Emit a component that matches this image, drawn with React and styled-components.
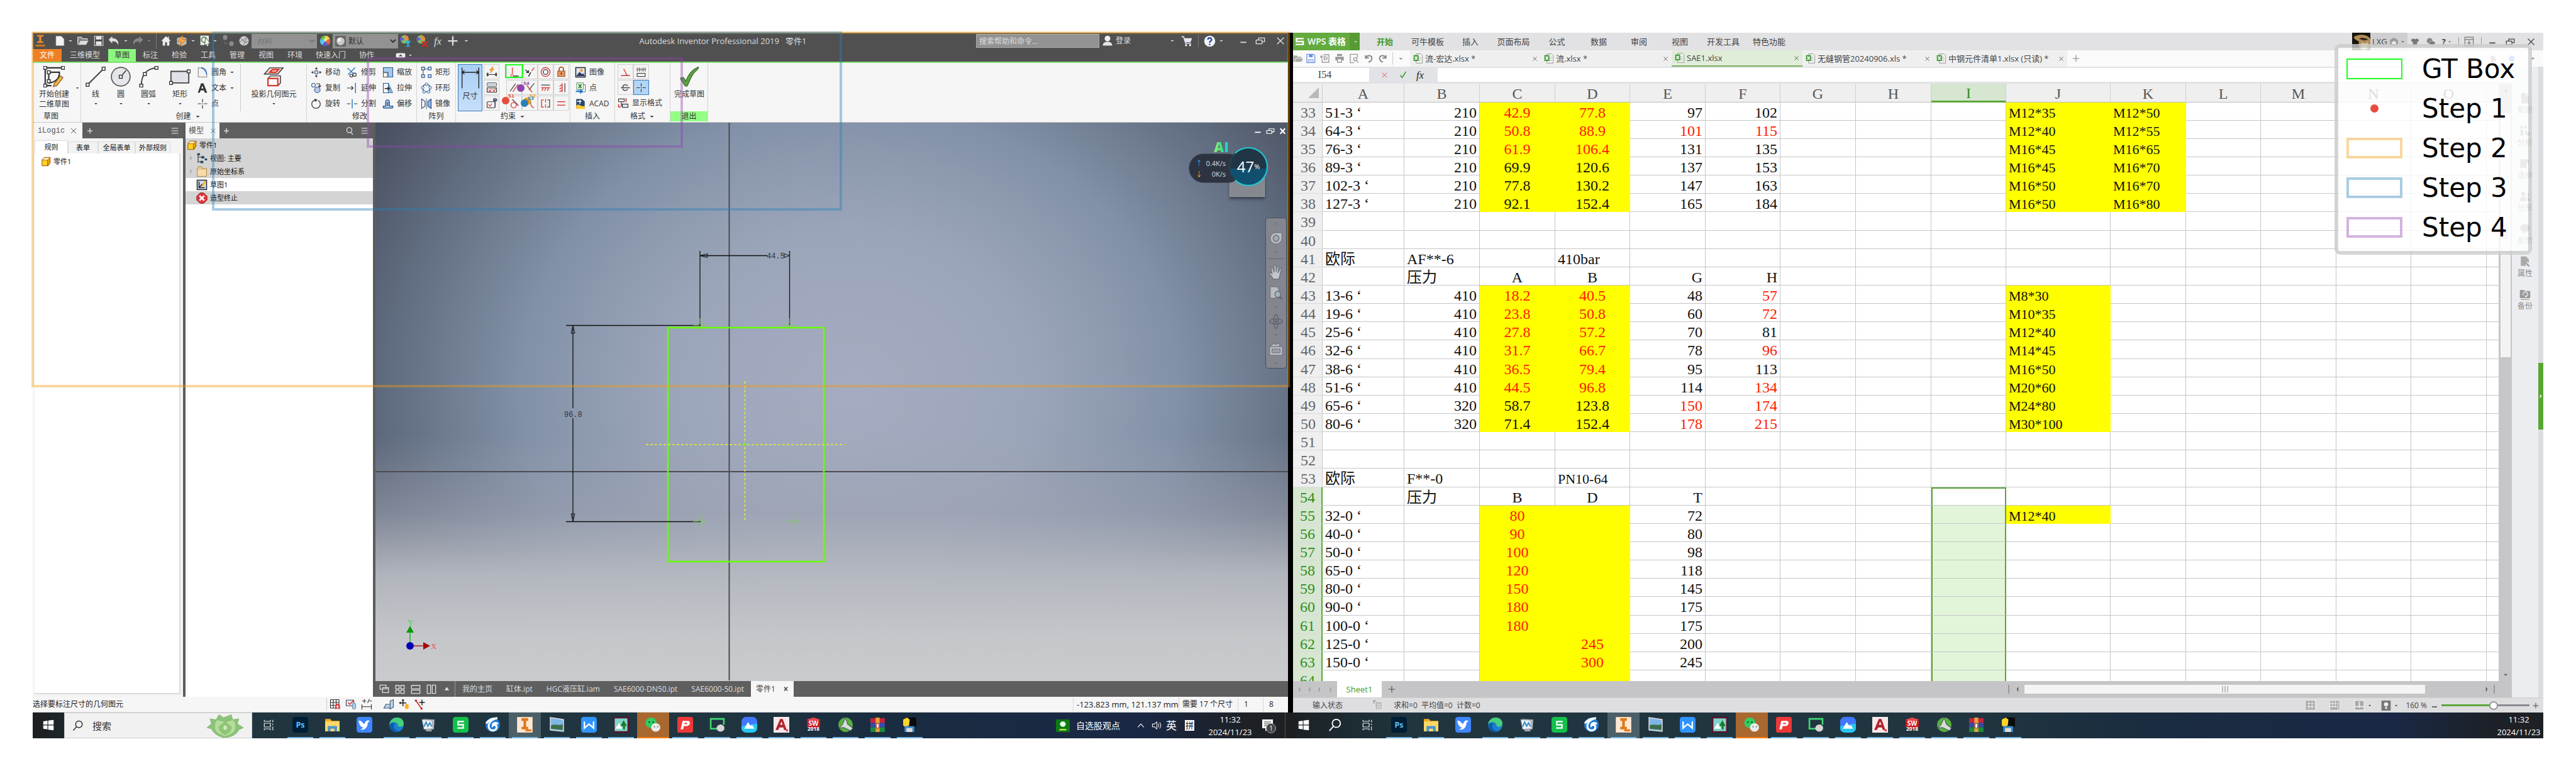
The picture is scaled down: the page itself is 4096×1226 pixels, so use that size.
import React from "react";
import styled, { createGlobalStyle, css } from "styled-components";

const SANS = '"Open Sans", "Noto Sans CJK SC", sans-serif';
const SERIF = '"Liberation Serif", "Noto Sans CJK SC", serif';

const Global = createGlobalStyle`
  * { box-sizing: border-box; }
  body { margin: 0; background: #fff; font: 12px/16px ${SANS}; color: #222; }
  button, input { font: inherit; color: inherit; margin: 0; }
  svg { display: block; flex: none; }
`;

/* ---------- icons ---------- */

const S = { fill: "none", stroke: "#333", strokeWidth: 1.5 };
const P = (d, stroke = "#333", fill = "none", w = 1.5) => (
  <path d={d} stroke={stroke} fill={fill} strokeWidth={w} />
);
const sq = (x, y, c = "#333") => <rect key={x + "-" + y} x={x - 1.7} y={y - 1.7} width="3.4" height="3.4" fill="#fff" stroke={c} />;

const ART = {
  down: P("M4 8h16l-8 9z", "none", "currentColor"),
  up: P("M4 17h16L12 5z", "none", "currentColor"),
  left: P("M17 2v20L7 12z", "none", "currentColor"),
  right: P("M7 2v20l10-10z", "none", "currentColor"),
  plus: P("M12 2v20M2 12h20", "currentColor", "none", 3),
  thinPlus: P("M12 3v18M3 12h18", "currentColor", "none", 2),
  close: P("M4 4l16 16M20 4L4 20", "currentColor", "none", 2),
  boldClose: P("M5 4l14 16M19 4L5 20", "currentColor", "none", 4),
  min: P("M4 16h16", "currentColor", "none", 3),
  restore: P("M8 9V5h14v9h-5M2 10h14v9H2z", "currentColor", "none", 2),
  burger: P("M3 4h18M3 12h18M3 20h18", "currentColor", "none", 2),
  search: <><circle cx="11" cy="10" r="7" fill="none" stroke="currentColor" strokeWidth="2" />{P("M15 16l6 6", "currentColor", "none", 2)}</>,
  searchWin: <><circle cx="14" cy="9" r="7" fill="none" stroke="currentColor" strokeWidth="2" />{P("M9 14l-7 8", "currentColor", "none", 2)}</>,
  pro: <><path d="M6 1h12v3h-4v9h4v3H6v-3h4V4H6z" fill="#e98c2e" /><rect x="3" y="19" width="18" height="4" fill="#c8741f" /></>,
  newDoc: P("M4 2h11l6 6v14H4z", "#aaa", "#f2f2f2", 1),
  open: <>{P("M2 20V5h7l2 3h9v3", "#ddd", "#888")}{P("M2 20l5-9h16l-5 9z", "#555", "#ddd", 1)}</>,
  save: <>{P("M3 2h18v20H3z", "#ddd", "#444", 1.5)}<rect x="6" y="3" width="12" height="6" fill="#eee" /><rect x="6" y="13" width="12" height="8" fill="#e6e6e6" /></>,
  undo: P("M9 3L2 10l7 7v-4c6 0 9 1 11 7 2-7-2-13-11-13z", "none", "currentColor"),
  redo: P("M15 3l7 7-7 7v-4c-6 0-9 1-11 7C2 13 6 7 15 7z", "none", "#888"),
  home: P("M12 2L2 12h3v10h5v-7h4v7h5V12h3l-4-4V3h-2v3z", "none", "#eee"),
  bolt: <><path d="M3 7l9-3 9 3v11l-9 4-9-4z" fill="#bbb" /><path d="M14 1L5 13h6l-3 10L20 9h-7z" fill="#ffb13b" stroke="#c85a10" /></>,
  select: <><rect x="2" y="2" width="16" height="18" fill="#eee" /><circle cx="9" cy="10" r="5" fill="none" stroke="#4a8a3a" strokeWidth="2" /><path d="M12 6l9 11-5 0 2 5-3 1-2-5-3 3z" fill="#fff" stroke="#333" /></>,
  chain: <g fill="#8b8b8b"><rect x="2" y="1" width="8" height="9" rx="3" /><rect x="14" y="13" width="8" height="9" rx="3" /><path d="M5 12v5h6" fill="none" stroke="#777" /></g>,
  globe: <><circle cx="12" cy="12" r="10" fill="#ccc" /><path d="M4 6l6 4 8-5M3 14l7-4 4 6 7-3M10 10l4 6-4 5M18 5l-4 11" stroke="#666" fill="none" /></>,
  wheel: <><path d="M12 12L12 1A11 11 0 0 1 22 8z" fill="#f6d53b" /><path d="M12 12L22 8a11 11 0 0 1-4 13z" fill="#e8643a" /><path d="M12 12l6 9a11 11 0 0 1-12 0z" fill="#5a5be0" /><path d="M12 12l-6 9A11 11 0 0 1 2 8z" fill="#56c3ee" /><path d="M12 12L2 8A11 11 0 0 1 12 1z" fill="#6fbd4e" /><circle cx="12" cy="10" r="4" fill="#fff" opacity=".5" /></>,
  wheelCup: <><circle cx="10" cy="9" r="8" fill="#7fbf5f" /><path d="M10 9V1a8 8 0 0 1 7 11z" fill="#ee8a3a" /><path d="M10 9L3 13a8 8 0 0 1 0-9z" fill="#6a5ae0" /><path d="M11 12h11l-4 6v4h3v1h-9v-1h3v-4z" fill="#35b0e8" /></>,
  wheelX: <><circle cx="10" cy="9" r="8" fill="#7fbf5f" /><path d="M10 9V1a8 8 0 0 1 7 11z" fill="#ee8a3a" /><path d="M10 9L3 13a8 8 0 0 1 0-9z" fill="#6a5ae0" /><path d="M12 13l10 10M22 13L12 23" stroke="#d42a20" strokeWidth="3" /></>,
  ball: <><rect width="24" height="24" fill="#666" /><circle cx="12" cy="12" r="9" fill="#c9c9c9" /><circle cx="9" cy="9" r="4" fill="#f2f2f2" /></>,
  person: <><circle cx="12" cy="7" r="6" fill="#f0f0f0" /><path d="M2 22c0-6 5-8 10-8s10 2 10 8z" fill="#e5e5e5" /></>,
  cart: <><path d="M1 3h4l4 13h11" stroke="#e8e8f4" strokeWidth="2" fill="none" /><path d="M6 6h16l-3 8H8z" fill="#e8e8f4" /><circle cx="10" cy="20" r="2" fill="#fff" /><circle cx="18" cy="20" r="2" fill="#fff" /></>,
  help: <><circle cx="12" cy="12" r="11" fill="#f2f4f8" /><path d="M8.5 9a3.5 3.5 0 1 1 5 3c-1.5 1-1.5 1.5-1.5 3M12 17v3" stroke="#2c4a9a" strokeWidth="3" fill="none" /></>,
  panelToggle: <><rect x="1" y="5" width="22" height="14" rx="3" fill="#eee" /><path d="M7 15l5-6 5 6z" fill="#444" /></>,

  startSketch: <>{P("M2 2v20M2 2h20M2 22h7M6 7h12c0 7-4 11-12 12z")}{[[2,2],[22,2],[2,22],[6,7],[6,17]].map(([a,b]) => sq(a,b))}<path d="M12 20l7-9 3 2-7 9-4 1z" fill="#f4b548" stroke="#7a5a20" strokeWidth=".8" /></>,
  line: <>{P("M3 21L21 3", "#444", "none", 1.4)}{sq(3, 21)}{sq(21, 3)}</>,
  circle: <><circle cx="12" cy="12" r="10.5" fill="#e4e6ea" stroke="#555" strokeWidth="1.2" />{P("M12 12l6-7", "#333", "none", 1)}{sq(12, 12)}</>,
  arc: <>{P("M4 22C4 10 10 3 21 2", "#444", "none", 1.4)}{sq(4, 22)}{sq(8, 9)}{sq(21, 2)}</>,
  rect: <>{P("M2 6h20v13H2z", "#444", "#dfe2e7", 1.3)}{sq(2, 19)}{sq(22, 6)}</>,
  fillet: <>{P("M3 2v20h18v-5C20 8 14 3 3 2z", "#888", "#f2f2f2")}{P("M9 2c7 1 11 7 12 14", "#2f7fd0", "none", 2.5)}</>,
  text: <path d="M9 2h5l8 20h-5l-2-5H8l-2 5H2zM9.5 13h4.5L11.7 7z" fill="#333" fillRule="evenodd" />,
  point: P("M12 2v7M12 15v7M2 12h7M15 12h7M11 12h2", "#333", "none", 1.6),
  project: <><path d="M7 2h15l-6 7H1z" fill="#f6dada" stroke="#333" /><path d="M10 4h7l-3 3H7z" fill="none" stroke="#e03020" strokeWidth="1.5" /><path d="M5 14l3-3h11v8l-3 3" fill="#eee" stroke="#333" /><rect x="5" y="14" width="11" height="8" fill="#fff" stroke="#e03020" strokeWidth="1.5" /></>,
  move: <><path d="M12 1l3 4H9zM12 23l3-4H9zM1 12l4-3v6zM23 12l-4-3v6z" fill="#333" /><path d="M12 5v2M12 17v2M5 12h2M17 12h2" {...S} /><rect x="9" y="9" width="6" height="6" {...S} stroke="#357" /></>,
  trim: <>{P("M2 3l13 12M3 17L18 2", "#2f7fd0", "none", 2)}<circle cx="17" cy="17" r="3.5" {...S} /><circle cx="10" cy="19" r="3" {...S} /></>,
  scale: <>{P("M2 2h20v20H12V12H2z", "#2d5b96", "#a8c8ec")}{P("M2 13h9v9H2z", "#555", "#fff")}</>,
  copy: <><circle cx="6" cy="6" r="4" {...S} stroke="#2d5b96" /><circle cx="14" cy="16" r="6" fill="#b8cbe6" stroke="#2d5b96" strokeWidth="1.5" />{P("M12 3h7v6M16 7l3 3 3-3")}</>,
  extend: <>{P("M1 12h12M10 8l4 4-4 4")}{P("M19 1v22", "#2f7fd0", "none", 2)}</>,
  stretch: <>{P("M2 2h11v20H2z", "#2d5b96", "#f4f6fa")}<path d="M13 2l9 20h-9z" fill="#8fb6e4" stroke="#2d5b96" />{P("M5 13h9M11 10l4 3-4 3", "#222", "none", 2)}</>,
  rotate: <>{P("M9 4a9 9 0 1 0 7 1", "#555", "none", 2)}<path d="M8 1l7 3-6 4z" fill="#333" /></>,
  split: <>{P("M1 12h7M16 12h7")}{P("M12 2v20", "#2f7fd0", "none", 2)}</>,
  offset: <>{P("M2 21h20M2 21v-4h5V9c0-3 1-5 4-5s4 2 4 5v8h7v4", "#2d5b96", "#c9dcf2", 2)}{P("M10 17V9h2v8", "#2d5b96")}</>,
  patRect: <>{P("M5 5h14M5 5v14", "#555")}{[[5,4],[19,4],[5,20],[19,20]].map(([x,y]) => <rect key={x+"/"+y} x={x-3} y={y-3} width="6" height="6" fill="#dfeaf8" stroke="#234a86" strokeWidth="1.5" />)}</>,
  patCirc: <><circle cx="12" cy="12" r="8" {...S} />{[[12,4],[20,11],[17,20],[7,20],[4,11]].map(([x,y]) => <circle key={x+"/"+y} cx={x} cy={y} r="3" fill="#cfe2f8" stroke="#2f6fb4" strokeWidth="1.2" />)}</>,
  mirror: <>{P("M12 1v22", "#333", "none", 1)}{P("M2 2l7 5v10l-7 5z", "#234a86", "#fff")}{P("M22 2l-7 5v10l7 5z", "#234a86", "#8fb6e4")}</>,
  image: <><rect x="2" y="2" width="20" height="20" fill="#dfe6ee" stroke="#223" strokeWidth="2" /><circle cx="14" cy="8" r="3" fill="#f0a020" /><path d="M3 20l7-9 5 5 3-2 3 6z" fill="#2a3c66" /></>,
  excel: <><rect x="8" y="5" width="14" height="15" fill="#fff" stroke="#345" /><rect x="4" y="1" width="14" height="14" fill="#eaf5e6" stroke="#2e7d32" />{P("M8 4l6 8M14 4l-6 8", "#2e7d32", "none", 2.5)}{P("M2 19h12M11 15l5 4-5 4", "#1976d2", "none", 2.5)}</>,
  acad: <><path d="M3 2h12l6 5v15H3z" fill="#26486f" /><path d="M3 16c8-6 10 5 18 0v7H3z" fill="#ffc72e" />{P("M5 7h9M11 4v8", "#fff", "none", 2)}</>,
  format: <><rect x="2" y="3" width="12" height="6" {...S} /><rect x="10" y="14" width="12" height="7" fill="#dbe8f8" stroke="#333" strokeWidth="1.5" />{P("M2 14v6h5M18 10V3h-2", "#e03030", "none", 2)}{P("M8 9v9h2", "#333")}</>,
  check: <path d="M2 14c2-2 4-2 6 3C11 9 15 4 22 1c1 1 0 2-1 3-6 5-8 11-11 18-1 1-2 1-3 0z" fill="#5f9f45" stroke="#2f6a22" strokeWidth=".8" />,
  dimAuto: <>{P("M2 14v8M22 14v8M2 18h20M5 15l-3 3 3 3M19 15l3 3-3 3")}<path d="M14 1L7 9h4l-2 6 8-9h-4z" fill="#ffb020" stroke="#d06010" strokeWidth=".7" /></>,
  showCons: <><rect x="2" y="2" width="20" height="8" rx="1" fill="#ccd2da" stroke="#444" /><rect x="2" y="13" width="20" height="9" {...S} />{P("M5 17l3 4 3-6M14 16l3 4 3-6", "#d03020")}</>,
  consSet: <><rect x="2" y="9" width="17" height="13" rx="2" {...S} />{P("M5 14l3 5 4-6", "#d03020")}{P("M19 1v8M16 2v5h6V2M19 9v11", "#557", "none", 2.5)}</>,
  coincident: <>{P("M8 2v14", "#e04040", "none", 2)}{P("M10 21h12", "#555", "none", 2.5)}<rect x="5" y="18" width="5" height="5" fill="#fff" stroke="#e04040" strokeWidth="1.5" /></>,
  collinear: <>{P("M2 7l7 6M9 8v5H4M9 22l5-9", "#222", "none", 2)}{P("M16 10l6-8", "#e04040", "none", 2)}</>,
  concentric: <><circle cx="12" cy="12" r="10" {...S} stroke="#e04040" strokeWidth="2" /><circle cx="12" cy="12" r="5.5" {...S} stroke="#444" strokeWidth="2" /></>,
  lock: <>{P("M7 10V6a5 5 0 0 1 10 0v4", "#a0522d", "none", 2.5)}<rect x="4" y="10" width="16" height="12" fill="#e8955c" stroke="#a0522d" strokeWidth="1.5" />{P("M12 13v5", "#5c2c10", "none", 2)}</>,
  parallel: <>{P("M3 20L15 3", "#555", "none", 2)}{P("M9 21L21 4", "#e04040", "none", 2)}</>,
  perp: <>{P("M22 2L10 17", "#555", "none", 2)}{P("M5 6l12 16", "#e04040", "none", 2)}</>,
  horiz: <>{P("M2 6h20", "#555", "none", 2)}{P("M2 12h20M7 12l-3 7M13 12l-3 7M19 12l-3 7", "#e04040", "none", 2)}</>,
  vert: <>{P("M20 2v20", "#555", "none", 2)}{P("M14 2v20M14 5l-6 4M14 11l-6 4M14 17l-6 4", "#e04040", "none", 2)}</>,
  tangent: <>{P("M8 3l14 14", "#555", "none", 2)}<circle cx="11" cy="16" r="6" {...S} stroke="#e04040" strokeWidth="2" /></>,
  smooth: <>{P("M10 2c4 3 4 8 4 10", "#555", "none", 2)}{P("M14 12c0 5 3 8 7 10", "#e04040", "none", 2)}</>,
  symm: <>{P("M8 4H3v16h5", "#e04040", "none", 2)}{P("M16 4h5v16h-5", "#555", "none", 2)}{P("M12 2v8M12 14v8", "#e04040", "none", 2)}</>,
  equal: P("M3 8h18M3 16h18", "#e04040", "none", 2.2),
  angle: <>{P("M8 5l8 15", "#e04040", "none", 2)}{P("M2 20h20", "#c03030", "none", 2)}</>,
  param: <><rect x="3" y="15" width="18" height="7" {...S} />{P("M3 2v9M8 2v9M3 6h5M16 2v9M21 2v9M16 6h5M10 4l4 5M14 4l-4 5", "#333", "none", 1.3)}</>,
  ctr: <>{P("M2 12h20M6 12a6 6 0 0 1 11-4M17 15a6 6 0 0 1-11-1", "#444", "none", 2)}</>,
  dimBig: <path d="M2 1v22M22 1v22M2 6h20M5 4L2 6l3 2M19 4l3 2-3 2" stroke="#222" strokeWidth="1" fill="none" />,

  cube: <><path d="M3 8l5-6h14v13l-5 7H3z" fill="#fff3b0" stroke="#9a4a10" strokeWidth="1.5" /><rect x="3" y="8" width="13" height="14" fill="#ffd21f" stroke="#9a4a10" /><path d="M16 8l6-6v13l-6 7z" fill="#e8a800" stroke="#9a4a10" /></>,
  views: <>{P("M4 3v18M4 9h8M4 19h8", "#333", "none", 1.5)}<g fill="#234a66"><rect x="2" y="1" width="6" height="4" /><rect x="11" y="7" width="6" height="5" /><rect x="9" y="17" width="6" height="5" /><rect x="18" y="12" width="5" height="4" /></g></>,
  folder: <><path d="M2 5l3-4h6l2 4h9v17H2z" fill="#e8c48a" stroke="#a0783a" /><path d="M3 8h18v13H3z" fill="#f6dca8" /></>,
  sketch: <><rect x="2" y="2" width="20" height="20" fill="#cfe0f4" stroke="#223" strokeWidth="2" />{P("M6 5v13h12M6 18L13 10", "#222", "none", 2)}<path d="M12 12l5-9 4 2-5 9-4 2z" fill="#f6b53a" /></>,
  endMark: <><path d="M8 1h8l7 7v8l-7 7H8l-7-7V8z" fill="#e3343a" stroke="#7a1010" /><path d="M7 7l10 10M17 7L7 17" stroke="#fff" strokeWidth="3.5" /></>,
  chevron: P("M8 5l7 7-7 7", "#999", "none", 3),

  cascade: P("M2 2h14v5M2 2v10h4M8 8h14v12H8zM8 11h14", "currentColor", "none", 2),
  grid4: P("M2 3h8v8H2zM14 3h8v8h-8zM2 14h8v8H2zM14 14h8v8h-8z", "currentColor", "none", 2),
  rows2: P("M2 3h20v8H2zM2 14h20v8H2z", "currentColor", "none", 2),
  cols2: P("M2 2h8v20H2zM14 2h8v20h-8z", "currentColor", "none", 2),

  gridSnap: <>{P("M2 2h18v18H2zM2 8h18M2 14h10M8 2v18M14 2v10", "#333")}<path d="M12 22v-6a5 5 0 0 1 10 0v6h-3v-6a2 2 0 0 0-4 0v6z" fill="#e03030" /></>,
  shield: <>{P("M2 3h16v12H2z", "#445", "#eef")}{P("M6 8l4 4 8-9", "#d03020", "none", 2)}<rect x="15" y="9" width="7" height="13" rx="3" fill="#a8d0f0" stroke="#467" /></>,
  tolerance: <>{P("M2 12v11M22 12v11M2 17h20M3 5h8M7 1v8M14 9l4-8M18 5h5", "#333", "none", 1.5)}</>,
  slab: <>{P("M2 20l4-8h9v8zM15 5l7-3v16l-7 4z", "#456", "#b8d4f0")}</>,
  moveBulb: <>{P("M9 2v14M2 9h14M7 4l2-2 2 2M4 7L2 9l2 2", "#222", "none", 2)}<rect x="13" y="11" width="8" height="11" rx="4" fill="#ffb020" /></>,
  moveLine: <>{P("M16 2v12M10 8h12", "#222", "none", 2)}{P("M3 4l12 17", "#d02020", "none", 2)}<rect x="1" y="2" width="4" height="4" fill="#d02020" /><rect x="13" y="19" width="4" height="4" fill="#d02020" /></>,

  navWheel: <><path d="M12 3h10v9a10 9 0 1 1-10-9z" fill="#b9bdc2" stroke="#666c74" /><circle cx="12" cy="12" r="5" fill="#a5aab0" stroke="#666c74" strokeWidth="1.5" /></>,
  hand: <path d="M8 22c-3-4-5-6-7-9 2-2 4 0 5 2L4 5c2-1 3 0 3 2l2 5V2c2-1 3 0 3 2v8l2-9c2 0 2 1 2 3l-1 7 4-7c2 0 2 1 1 3-2 5-2 9-4 13z" fill="#c3c7cc" stroke="#666c74" />,
  pageZoom: <><path d="M2 2h11l4 4v14H2z" fill="#b9bdc2" stroke="#666c74" /><circle cx="15" cy="14" r="5" fill="#a5b5b5" stroke="#666c74" strokeWidth="1.5" />{P("M18 18l5 4", "#666c74", "none", 3)}</>,
  orbit: <><ellipse cx="12" cy="12" rx="11" ry="4" {...S} stroke="#5c626c" /><ellipse cx="12" cy="12" rx="4" ry="11" {...S} stroke="#5c626c" />{P("M12 9v6M9 12h6", "#5c626c")}</>,
  camera: <><path d="M1 8h22v14H1z" fill="#b9bdc2" stroke="#666c74" /><rect x="5" y="12" width="14" height="6" fill="#9a9fa8" stroke="#666c74" /><path d="M1 8l9-6v3l8-2v5z" fill="#b9bdc2" stroke="#666c74" /></>,

  win: <path d="M1 4l9-1.5V11H1zM11.5 2.3L23 1v10H11.5zM1 12.5h9V21l-9-1.5zM11.5 12.5H23V23l-11.5-1.5z" fill="#fff" />,
  task: P("M3 1v3h13V1M3 8h13v8H3zM3 23v-3h13v3M21 1v5M21 9v3M21 15v8", "#eee", "none", 1.6),
  ps: <><rect width="24" height="24" rx="4" fill="#001e36" /><text x="12" y="16" fontSize="12" fontWeight="700" textAnchor="middle" fill="#5ac1ff" fontFamily="Open Sans">Ps</text></>,
  explorer: <><path d="M1 3h8l2 3h12v16H1z" fill="#f2b01e" /><path d="M1 7h22v15H1z" fill="#ffd868" /><path d="M5 22v-8h14v8h-4v-4H9v4z" fill="#4a94d0" /></>,
  bird: <><rect width="24" height="24" rx="4" fill="#3f86ff" /><path d="M3 6c5-1 6 4 9 5 1-4 4-7 8-5l-3 3c0 8-6 12-12 10 2 0 4-1 5-3-4 0-6-5-7-10z" fill="#fff" /></>,
  edge: <><circle cx="12" cy="12" r="11" fill="#1a7fcf" /><path d="M1 12C2 4 8 1 13 1c7 0 10 5 10 9 0 3-2 5-6 5-3 0-3-2-3-3 0-4-9-7-13 0z" fill="#45d07a" /><path d="M9 10c-4 4 0 12 8 12-9 4-16-2-16-9 1-3 5-5 8-3z" fill="#0e5aa8" /></>,
  monitorApp: <><path d="M4 3l17 1-1 15-13 1z" fill="#b8bec4" /><path d="M2 4l15 1 2 13-14 1z" fill="#eef1f4" stroke="#99a" /><path d="M5 15l3-7 3 6 3-5 3 6" stroke="#3a8fc0" strokeWidth="2" fill="none" /><path d="M8 19l8-1 1 4H8z" fill="#a0a5aa" /></>,
  wpsS: <><rect width="24" height="24" rx="4" fill="#12c04a" />{P("M17 7H8v5h8v5H7", "#fff", "none", 2.2)}</>,
  swirl: <><circle cx="12" cy="12" r="11" fill="#1f7ad8" /><path d="M19 2C9 4 5 10 6 16c2 6 11 6 12 0 0-4-4-5-6-3 0-4 5-5 8-2M2 10C6 4 13 2 19 2" stroke="#fff" strokeWidth="3" fill="none" /></>,
  inventor: <><rect width="24" height="24" fill="#fbe9d8" stroke="#e2a66c" /><path d="M7 2h10v4h-3v9h3v4H7v-4h3V6H7z" fill="#e07818" /><rect x="13" y="19" width="9" height="3" fill="#e07818" /></>,
  photo: <><path d="M2 1l20 3v18l-20-2z" fill="#7fb6e6" stroke="#ddd" strokeWidth="1.5" /><path d="M3 13c6-3 12 1 18-2v9l-18-2z" fill="#3d6e4a" /></>,
  wpsW: <><rect width="24" height="24" rx="4" fill="#2f94ff" />{P("M5 7v10l7-6 7 6V7", "#fff", "none", 2.2)}</>,
  tree: <><rect x="1" y="1" width="22" height="22" fill="#7fd6c8" stroke="#5a1030" strokeWidth="2.5" /><path d="M3 18l6-9 5 9z" fill="#fff" /><path d="M16 5l5 9h-3v5h-3v-5h-4z" fill="#1c7a2a" /></>,
  wechat: <><ellipse cx="9" cy="9" rx="8.5" ry="8" fill="#2fce63" /><circle cx="6" cy="8" r="1.3" fill="#145c2a" /><circle cx="12" cy="8" r="1.3" fill="#145c2a" /><ellipse cx="16" cy="16" rx="7" ry="6.5" fill="#ececec" /><circle cx="14" cy="15" r="1" fill="#777" /><circle cx="19" cy="15" r="1" fill="#777" /></>,
  pdfP: <><rect width="24" height="24" rx="3" fill="#ee3838" /><path d="M5 19l3-13h8c5 0 4 8-2 8h-4l-1 5z" fill="#fff" /><path d="M11 9h4v2h-4z" fill="#ee3838" /></>,
  castChat: <>{P("M16 18H2V3h20v9", "#3dd873", "none", 2.5)}<ellipse cx="17" cy="17" rx="6" ry="5.5" fill="#d5d5d5" /></>,
  mountain: <><rect width="24" height="24" rx="7" fill="#3f78ff" /><path d="M0 14l24-4v7a7 7 0 0 1-7 7H7a7 7 0 0 1-7-7z" fill="#25c7f0" /><path d="M4 18l6-10 4 6 2-2 4 6z" fill="#fff" /></>,
  autocad: <><rect width="24" height="24" fill="#f8eaea" /><path d="M3 20L10 3h4l6 17h-4l-1-4H9l-2 4zM10 12h4l-2-5z" fill="#b3202c" fillRule="evenodd" /><rect x="19" y="19" width="3" height="3" fill="#e03040" /></>,
  solid: <><path d="M2 4l10-3 10 3v11l-10 4-10-4z" fill="#c81820" /><path d="M12 1l10 3-10 4L2 4z" fill="#e84a50" /><text x="12" y="13" fontSize="10" fontWeight="700" textAnchor="middle" fill="#fff" fontFamily="Open Sans">SW</text><text x="12" y="21" fontSize="8" fontWeight="700" textAnchor="middle" fill="#fff" fontFamily="Open Sans">2018</text></>,
  coil: <><circle cx="12" cy="12" r="11" fill="#57b03c" /><path d="M12 1l3 10 8 6-3 4-11-5-7 1 5-5z" fill="#d8dcd4" stroke="#456" /></>,
  rar: <><rect x="1" y="2" width="22" height="7" fill="#c8243c" /><rect x="1" y="9" width="22" height="7" fill="#3c48a8" /><rect x="1" y="16" width="22" height="7" fill="#1c8a3c" /><rect x="9" y="1" width="6" height="22" fill="#e8a23a" /><rect x="10" y="10" width="4" height="7" fill="#fff" stroke="#933" /></>,
  python: <><rect x="6" y="1" width="16" height="14" fill="#0a0a0a" /><path d="M2 4l6-3 4 3-1 9-5 3-4-3z" fill="#ffd42a" /><rect x="4" y="14" width="15" height="9" fill="#3c88c8" /><rect x="7" y="17" width="9" height="6" fill="#ddd" /></>,
  stock: <><rect width="24" height="24" rx="2" fill="#0d7a14" /><circle cx="12" cy="9" r="5" fill="#eaffea" /><rect x="6" y="18" width="12" height="3" fill="#b8e04a" /></>,
  speaker: P("M2 9h4l6-5v16l-6-5H2zM15 8c2 3 2 5 0 8M18 5c4 5 4 9 0 14", "#eee", "none", 1.5),
  caret: P("M4 16l8-9 8 9", "#eee", "none", 2),
  note: <><path d="M2 2h17v14h-7l-5 5v-5H2z" fill="#fff" /><path d="M5 6h11M5 9h11M5 12h7" stroke="#333" /><circle cx="16" cy="16" r="7.5" fill="#444" stroke="#aaa" /><text x="16" y="20" fontSize="10" textAnchor="middle" fill="#fff" fontFamily="Open Sans">1</text></>,
  plant: <g strokeWidth=".4" stroke="#7fae68"><path d="M12 24c-5-1-8-5-9-9l-3-1 3-4-1-5 4 1 2-5 3 3 5-3 1 5 4-1-1 5 4 4-3 2c-1 4-4 7-9 8z" fill="#8cc47a" /><path d="M12 23c-4-2-7-5-7-9 0-3 0-6 2-8l5 2 5-2c2 2 2 5 2 8 0 4-3 7-7 9z" fill="#b5dd9c" /><path d="M12 21c-3-2-4-5-4-8l4-5 4 5c0 3-1 6-4 8z" fill="#8fc878" /><path d="M12 17c-2-2-2-4 0-6 2 2 2 4 0 6z" fill="#cdeab8" /></g>,

  folderG: <path d="M1 20V5h8l2 3h9v3H7l-4 9zM8 12h16l-4 8H4z" fill="#aaa" />,
  saveB: <><path d="M3 2h16l3 3v17H3z" fill="#fff" stroke="#6a8fe0" strokeWidth="2" /><rect x="8" y="2" width="9" height="7" fill="#6a8fe0" /><rect x="7" y="14" width="11" height="8" fill="#cddaf8" stroke="#6a8fe0" /></>,
  pdf: P("M8 3h13v18H5v-8M10 16v-8h4a3 3 0 0 1 0 6h-4M1 8h7M5 4l-4 4 4 4", "#999", "none", 2),
  print: <path d="M6 1h12v5H6zM2 8h20v9h-4v5H6v-5H2zM8 14v6h8v-6z" fill="#999" fillRule="evenodd" />,
  preview: <>{P("M20 10V2H3v20h9", "#999", "none", 2)}<circle cx="15" cy="14" r="4" {...S} stroke="#999" strokeWidth="2" />{P("M18 17l4 5", "#999", "none", 2)}</>,
  undoC: P("M5 4v7h8M5 11c4-8 15-8 15 1 0 4-3 7-8 9", "currentColor", "none", 3),
  redoC: P("M19 4v7h-8M19 11C15 3 4 3 4 12c0 4 3 7 8 9", "currentColor", "none", 3),
  xls: <><path d="M7 1h11l4 4v18H7z" fill="#f4f4f4" stroke="#999" strokeWidth="1.5" /><path d="M13 9h6M13 13h6M13 17h6" stroke="#999" /><rect x="1" y="4" width="12" height="14" fill="#3e9b35" /><path d="M4 7l6 8M10 7l-6 8" stroke="#fff" strokeWidth="2.5" /></>,
  tick: P("M3 13l6 8L21 2", "#3a9a30", "none", 3),
  fx: <text x="12" y="19" fontSize="20" fontStyle="italic" textAnchor="middle" fill="currentColor" fontFamily="Liberation Serif">fx</text>,
  corner: <path d="M24 0v24H0z" fill="#b8b8b8" />,
  wps: P("M22 4H4v8h17v8H2", "#fff", "none", 4),
  crown: <><path d="M12 1l10 6v14H2V7z" fill="#999" /><path d="M6 10l3 3 3-5 3 5 3-3-1 8H7z" fill="#eee" /></>,
  shirt: <path d="M8 2c1 3 7 3 8 0l7 4-2 6-3-1v11H6V11l-3 1-2-6z" fill="#777" />,
  chat: <><circle cx="9" cy="9" r="8" fill="#888" /><ellipse cx="16" cy="16" rx="8" ry="6" fill="#777" stroke="#e2e2e4" /></>,
  inbox: P("M2 2h20v20H2zM2 7h20M12 9v9M8 14l4 4 4-4", "#888", "none", 2.2),
  face: <><rect width="24" height="24" fill="#17140c" /><path d="M2 6c8-6 20-3 22 3v10c-4 4-8 6-11 5C9 20 8 16 9 12 6 10 3 9 2 6z" fill="#b08d5a" /><path d="M9 8c4-2 8-1 12 1-3 2-8 2-12-1z" fill="#3a2a18" /><path d="M12 13c3 2 6 2 9 0l-2 9h-6z" fill="#e0c896" /></>,
  page: <path d="M4 1h9v7h7v15H4zM14 1l6 6h-6z" fill="#999" />,
  blocks: <path d="M2 2h6v5H2zM10 2h6v5h-6zM2 10h6v12H2zM12 12h4v4h6v6h-6l-4-4z" fill="#999" />,
  pick: <path d="M2 3h18v10l-5-4v12H2z" fill="#999" />,
  people: <path d="M8 3a4 4 0 1 1 0 9 4 4 0 0 1 0-9zM1 22c0-12 14-12 14 0zM17 5a3 3 0 1 1 0 7zM17 22c0-4-1-6-2-8 5-1 8 3 8 8z" fill="#999" />,
  bubble: <path d="M12 2c14 0 13 17 1 16l-6 5v-6C-2 13 1 2 12 2z" fill="#999" />,
  wrench: <><path d="M3 1h11l6 6v8l-4-3-4 4 3 5H3z" fill="#aaa" />{P("M13 14l8 8", "#999", "none", 3)}</>,
  backup: <><path d="M1 3h9l2 2h11v15H1z" fill="#999" />{P("M8 14a5 5 0 1 1 5 3M13 14v4", "#eee", "none", 1.8)}{P("M3 23h18", "#aaa", "none", 2)}</>,
  stat: <><circle cx="4" cy="4" r="4" fill="#aaa" /><path d="M5 4h16v18H5zM9 10h9M9 14h9M9 18h9" fill="#bbb" stroke="#eee" strokeWidth="1.5" /></>,
  vNormal: <path d="M1 1h22v22H1zM4 8h16M4 15h16M9 4v16M16 4v16" fill="#aaa" stroke="#eee" strokeWidth="1.5" />,
  vBreak: <path d="M1 1h22v22H1zM1 8h16M1 15h16M7 1v16M13 1v16M19 4v20" fill="#aaa" stroke="#eee" strokeWidth="1.5" />,
  vCross: <path d="M1 1h22v22H1zM1 15h22M12 4v14" fill="#aaa" stroke="#eee" strokeWidth="2.5" />,
  bulb: <><rect x="1" y="0" width="22" height="24" fill="#777" /><circle cx="12" cy="9" r="5" fill="#eee" /><rect x="10" y="15" width="4" height="5" fill="#eee" /></>,
  drop: <path d="M12 2c7 1 9 8 9 12 0 10-18 10-18 0 0-4 2-11 9-12z" fill="#5b8def" />,
};

const Icon = ({ n, w = 16, h }) => (
  <svg width={w} height={h || w} viewBox="0 0 24 24" preserveAspectRatio="none" aria-hidden="true">{ART[n]}</svg>
);

/* ---------- shared parts ---------- */

const Row = styled.div`
  display: flex;
  align-items: center;
  gap: ${(p) => p.$gap || 0}px;
`;
const Spacer = styled.div`flex: ${(p) => p.$grow || 1} 1 0;`;
const Gap = styled.div`width: ${(p) => p.$w}px; flex: none;`;
const Btn = styled.button`
  display: flex;
  align-items: center;
  justify-content: ${(p) => p.$justify || "center"};
  gap: ${(p) => p.$gap || 0}px;
  flex: none;
  ${(p) => p.$w && css`width: ${p.$w}px;`}
  margin-left: ${(p) => p.$ml || 0}px;
  padding: 0;
  border: 0;
  background: none;
  color: ${(p) => p.$c || "inherit"};
  white-space: nowrap;
`;
const Rule = styled.div`
  width: 1px;
  align-self: stretch;
  flex: none;
  margin: ${(p) => p.$m || 0}px 0 ${(p) => p.$m || 0}px ${(p) => p.$ml || 0}px;
  background: ${(p) => p.$c || "#888"};
`;

const Page = styled.main`
  position: relative;
  min-height: 100vh;
  padding: 52px;
  overflow: hidden;
`;
const Desktop = styled.div`
  display: flex;
  height: calc(100vh - 104px);
  min-height: 900px;
`;
const Monitor = styled.section`
  flex: 1 1 0;
  min-width: 0;
  display: flex;
  flex-direction: column;
`;
const Screen = styled.div`
  display: flex;
  flex: 1 1 0;
  min-height: 0;
`;
const Black = styled.div`
  width: 8px;
  flex: none;
  background: #000;
`;

/* ---------- Inventor ---------- */

const DarkBar = styled(Row)`
  height: ${(p) => p.$h}px;
  flex: none;
  background: #505050;
  color: #ddd;
`;
const TitleBar = styled(DarkBar)`padding: 0 4px 0 2px;`;
const DarkField = styled.select`
  width: 104px;
  height: 23px;
  flex: none;
  margin-left: 3px;
  padding: 0 0 0 ${(p) => p.$pad || 4}px;
  border: 0;
  background: #929292;
  color: ${(p) => p.$color};
  font: ${(p) => p.$style || "normal"} 12px/16px ${SANS};
`;
const SwatchField = styled.div`
  position: relative;
  display: flex;
  & > svg { position: absolute; left: 7px; top: 3px; }
`;
const Caption = styled.h1`
  margin: 0;
  font: 13px/18px ${SANS};
  white-space: pre;
`;
const HelpSearch = styled.input`
  width: 196px;
  height: 22px;
  flex: none;
  padding: 0 4px;
  border: 1px solid #aaa;
  background: #929292;
  &::placeholder { color: #ddd; opacity: 1; }
`;
const RibbonTab = styled.button`
  width: ${(p) => p.$w || 46}px;
  height: 100%;
  flex: none;
  padding: 0;
  border: 0;
  white-space: nowrap;
  background: ${(p) => p.$bg || "none"};
  color: ${(p) => p.$fg || "#ddd"};
`;
const Ribbon = styled.div`
  display: flex;
  flex: none;
  height: 97px;
  border-top: 2px solid #7fe070;
  border-bottom: 1px solid #c8c8c8;
  background: #f6f6f6;
  color: #333;
`;
const Group = styled.section`
  display: flex;
  flex-direction: column;
  flex: none;
  width: ${(p) => p.$w}px;
  border-right: 1px solid #d4d4d4;
`;
const GroupBody = styled.div`
  display: flex;
  height: 77px;
  padding-top: 2px;
  padding-left: ${(p) => p.$pl || 0}px;
`;
const GroupLabel = styled.div`
  display: flex;
  align-items: center;
  justify-content: center;
  gap: 6px;
  height: 16px;
  margin-right: ${(p) => p.$mr || 0}px;
  background: ${(p) => p.$bg || "none"};
`;
const BigButton = styled(Btn)`
  flex-direction: column;
  justify-content: flex-start;
  padding-top: 3px;
  gap: 3px;
  text-align: center;
  & > svg:last-child:not(:first-child) { margin-top: 1px; }
`;
const Stack = styled.div`
  display: flex;
  flex-direction: column;
  width: ${(p) => p.$w || "auto"}px;
  flex: none;
`;
const ToolButton = styled(Btn)`
  height: 25px;
  justify-content: flex-start;
  gap: 5px;
`;
const Cells = styled.div`
  display: grid;
  grid-template-columns: repeat(${(p) => p.$cols}, 25px);
  grid-auto-rows: 24px;
  row-gap: 1px;
  flex: none;
  align-content: start;
  margin-left: ${(p) => p.$ml || 0}px;
`;
const CellButton = styled(Btn)`
  border: 1px solid ${(p) => (p.$on ? "#3a7bbf" : "#d0d0d0")};
  background: ${(p) => (p.$on ? "#b3d4f5" : "#f4f4f4")};
`;
const DimensionButton = styled(BigButton)`
  height: 75px;
  border: 1px solid #3a7bbf;
  background: linear-gradient(#a9cff5, #c6dffa);
`;

const Work = styled.div`
  display: flex;
  flex: 1 1 0;
  min-height: 0;
`;
const Panel = styled.aside`
  display: flex;
  flex-direction: column;
  flex: none;
  width: ${(p) => p.$w}px;
  border-right: 4px solid #5c5c5c;
  background: ${(p) => p.$bg || "#fff"};
`;
const PanelHead = styled(Row)`
  height: 25px;
  flex: none;
  padding-right: 6px;
  background: #5f5f5f;
  color: #eee;
`;
const PanelTab = styled(Btn)`
  height: 25px;
  background: #f6f6f6;
  color: #555;
  font-family: ${(p) => (p.$mono ? '"Liberation Mono", monospace' : SANS)};
`;
const RuleTabs = styled.div`
  display: flex;
  align-items: flex-end;
  height: 24px;
  flex: none;
  padding: 3px 0 0 3px;
`;
const RuleTab = styled.button`
  width: ${(p) => p.$w}px;
  height: ${(p) => (p.$on ? 21 : 19)}px;
  padding: 0;
  border: 1px solid #dcdcdc;
  border-bottom: 0;
  background: ${(p) => (p.$on ? "#fff" : "#f2f2f2")};
  color: #111;
  font-size: 11px;
  white-space: nowrap;
`;
const RuleBox = styled.div`
  flex: 1;
  margin: 0 4px 4px 3px;
  padding: 2px 8px;
  border: 1px solid #dcdcdc;
  border-width: 0 2px 2px 0;
  background: #fff;
`;
const TreeRow = styled.div`
  display: flex;
  align-items: center;
  gap: 4px;
  height: 21px;
  padding-left: ${(p) => p.$pl || 2}px;
  background: ${(p) => (p.$plain ? "#fff" : "#d4d4d4")};
  color: #111;
  font-size: 11px;
  white-space: nowrap;
`;
const View = styled.div`
  position: relative;
  flex: 1;
  min-width: 0;
  overflow: hidden;
  background:
    linear-gradient(rgba(160,164,178,0) 56%, rgba(160,164,178,.55) 70%, rgba(182,185,192,.95) 81%, #c4c6ca 92%, #cacbcf 100%),
    radial-gradient(ellipse 58% 82% at 52% 48%, #a5acc1 0, #9ba5b9 35%, #8291a8 62%, #5f6b7e 88%, #464c5b 108%);
`;
const Sketch = styled.svg`
  position: absolute;
  inset: 0;
`;
const DocButtons = styled(Row)`
  position: absolute;
  top: 6px;
  right: 2px;
  color: #fff;
`;
const Speed = styled.div`
  position: absolute;
  top: 49px;
  right: 72px;
  width: 86px;
  height: 47px;
  padding: 6px 26px 6px 10px;
  border: 1px solid #4a5262;
  border-radius: 24px;
  background: #2d3341;
  color: #ddd;
  font-size: 11px;
  line-height: 17px;
`;
const SpeedRow = styled.div`
  display: flex;
  justify-content: space-between;
`;
const Arrow = styled.span`color: ${(p) => p.$c};`;
const Gauge = styled.div`
  position: absolute;
  top: 39px;
  right: 32px;
  display: flex;
  align-items: center;
  justify-content: center;
  width: 62px;
  height: 62px;
  border: 2px solid #1ecbd6;
  border-left-color: #244650;
  border-radius: 50%;
  background: linear-gradient(#203646 55%, #10506e 56%);
  color: #fff;
  font-size: 24px;
  line-height: 28px;
  small { font-size: 11px; }
`;
const AiTag = styled.div`
  position: absolute;
  top: 27px;
  right: 94px;
  font: 800 22px/22px "Open Sans", sans-serif;
  background: linear-gradient(90deg, #9cf06a, #2fe08a 60%, #20c8f0);
  background-clip: text;
  color: transparent;
`;
const CubeFace = styled.div`
  position: absolute;
  top: 86px;
  right: 37px;
  width: 56px;
  height: 32px;
  border: 1px solid #9a9da3;
  background: #85888f;
  box-shadow: 0 4px 4px rgba(30,34,44,.5);
`;
const NavBar = styled.nav`
  position: absolute;
  top: 151px;
  right: 2px;
  display: flex;
  flex-direction: column;
  align-items: center;
  justify-content: space-between;
  width: 34px;
  height: 240px;
  padding: 5px 2px;
  border: 1px solid #4a4f5a;
  border-radius: 5px;
  background: #83868f;
  color: #5c626c;
`;
const NavRule = styled.div`
  width: 26px;
  height: 1px;
  background: #62666f;
`;
const DocTabs = styled(Row)`
  height: 25px;
  flex: none;
  background: #5f5f5f;
  color: #ddd;
  padding-left: 1px;
`;
const DocTab = styled(Btn)`
  height: 25px;
  padding: 0 ${(p) => p.$pad || 11}px;
  background: ${(p) => (p.$on ? "#f6f6f6" : "none")};
  color: ${(p) => (p.$on ? "#444" : "#ddd")};
`;
const StatusBar = styled(Row)`
  height: 25px;
  flex: none;
  border-bottom: 1px solid #d8d8d8;
  background: #f6f6f6;
  color: #222;
`;
const Prompt = styled.div`width: 467px;`;
const StatusCell = styled.div`
  width: ${(p) => p.$w}px;
  flex: none;
  padding-left: ${(p) => p.$pl || 5}px;
  border-left: 1px solid #d8d8d8;
  line-height: 22px;
  white-space: nowrap;
  font-size: ${(p) => p.$size || 12}px;
`;

/* ---------- taskbar ---------- */

const Bar = styled(Row)`
  height: 41px;
  flex: none;
  background: linear-gradient(90deg, #1d1f20 0, #1c2a30 4%, #20353f 10%, #20353f 55%, #1a2c40 68%, #1a2845 88%, #1d2024 97%);
  color: #fff;
`;
const TaskButton = styled(Btn)`
  width: ${(p) => p.$w || 51}px;
  height: 41px;
  border-bottom: 2px solid ${(p) => p.$line || "transparent"};
  background: ${(p) => p.$bg || "none"};
  ${(p) => p.$run && css`
    background-image: linear-gradient(#76b9ed, #76b9ed);
    background-size: 41px 2px;
    background-repeat: no-repeat;
    background-position: 5px 100%;
    background-origin: border-box;
  `}
`;
const SearchBox = styled.label`
  display: flex;
  align-items: center;
  gap: 12px;
  width: 299px;
  height: 41px;
  flex: none;
  padding: 0 13px 0 12px;
  border: 1px solid #ccc;
  background: #f1f1f1;
  color: #333;
  input {
    flex: 1;
    min-width: 0;
    border: 0;
    background: none;
    font-size: 15px;
    outline: 0;
  }
  input::placeholder { color: #333; opacity: 1; }
`;
const Tray = styled.span`
  font-size: ${(p) => p.$size}px;
  margin-left: ${(p) => p.$ml || 0}px;
  white-space: nowrap;
`;
const Ime = styled.span`
  width: 15px;
  height: 17px;
  margin: 0 22px 0 13px;
  background: #fff;
  color: #111;
  font-size: 13px;
  line-height: 17px;
  text-align: center;
`;
const Clock = styled.time`
  width: 70px;
  flex: none;
  font-size: 13px;
  line-height: 20px;
  text-align: center;
  white-space: nowrap;
`;

const APPS = ["ps", "explorer", "bird", "edge", "monitorApp", "wpsS", "swirl", "inventor", "photo", "wpsW", "tree", "wechat", "pdfP", "castChat", "mountain", "autocad", "solid", "coil", "rar", "python"];

function Apps() {
  return APPS.map((a) => (
    <TaskButton
      key={a}
      aria-label={a}
      $run={a !== "bird" && a !== "wechat"}
      $bg={a === "inventor" ? "#4b5f68" : a === "wechat" ? "#a8682f" : undefined}
      $line={a === "wechat" ? "#ff7a00" : undefined}
    >
      <Icon n={a} w={25} />
    </TaskButton>
  ));
}

const Now = () => <Clock>11:32<br />2024/11/23</Clock>;

function MainTaskbar() {
  return (
    <Bar as="footer">
      <TaskButton $w={50} aria-label="start"><Icon n="win" w={18} /></TaskButton>
      <SearchBox>
        <Icon n="searchWin" w={18} />
        <input placeholder="搜索" />
        <Icon n="plant" w={58} h={38} />
      </SearchBox>
      <TaskButton aria-label="task view"><Icon n="task" w={18} /></TaskButton>
      <Apps />
      <Spacer />
      <Icon n="stock" w={22} h={20} />
      <Tray $size={14} $ml={10}>自选股观点</Tray>
      <Btn $ml={26} aria-label="more"><Icon n="caret" w={14} /></Btn>
      <Btn $ml={10} aria-label="volume"><Icon n="speaker" w={17} /></Btn>
      <Tray $size={17} $ml={6}>英</Tray>
      <Ime>拼</Ime>
      <Now />
      <Btn $w={52} aria-label="notifications"><Icon n="note" w={24} /></Btn>
      <Rule $c="#555" />
      <Gap $w={4} />
    </Bar>
  );
}

function SecondTaskbar() {
  return (
    <Bar as="footer">
      <TaskButton $w={50} aria-label="start"><Icon n="win" w={18} /></TaskButton>
      <TaskButton $w={50} aria-label="search"><Icon n="searchWin" w={22} /></TaskButton>
      <TaskButton aria-label="task view"><Icon n="task" w={18} /></TaskButton>
      <Apps />
      <Spacer />
      <Now />
      <Gap $w={4} />
    </Bar>
  );
}

const Dd = ({ ml = 0, w = 8, c }) => <Btn $ml={ml} $w={w} $c={c} aria-label="open list"><Icon n="down" w={w} h={6} /></Btn>;

function InventorTitle() {
  const b = (n, w, ml) => <Btn $w={w} $ml={ml} aria-label={n}><Icon n={n} w={w} /></Btn>;
  return (
    <TitleBar as="header" $h={26}>
      {b("pro", 20, 0)}{b("newDoc", 18, 12)}<Dd ml={4} />{b("open", 20, 6)}{b("save", 18, 6)}{b("undo", 20, 5)}<Dd ml={5} />
      {b("redo", 20, 5)}<Dd ml={4} c="#888" />
      <Rule $c="#777" $ml={7} />
      {b("home", 18, 6)}{b("bolt", 20, 6)}<Dd ml={4} />{b("select", 20, 6)}<Dd ml={1} />{b("chain", 20, 7)}{b("globe", 18, 6)}
      <DarkField aria-label="材料" $color="#777" $style="italic"><option>材料</option></DarkField>
      {b("wheel", 18, 4)}
      <SwatchField>
        <DarkField aria-label="外观" $color="#333" $pad={21}><option>默认</option></DarkField>
        <Icon n="ball" w={17} />
      </SwatchField>
      {b("wheelCup", 20, 2)}{b("wheelX", 20, 6)}{b("fx", 20, 5)}{b("plus", 18, 5)}<Dd ml={8} w={9} />
      <Spacer $grow={270} />
      <Caption>Autodesk Inventor Professional 2019   零件1</Caption>
      <Spacer $grow={269} />
      <HelpSearch aria-label="搜索帮助" placeholder="搜索帮助和命令..." />
      {b("person", 18, 4)}
      <Btn $ml={4}>登录</Btn>
      <Dd ml={62} />{b("cart", 19, 10)}
      <Rule $c="#777" $ml={8} $m={3} />
      {b("help", 19, 8)}<Dd ml={5} />{b("min", 14, 24)}{b("restore", 16, 12)}{b("close", 16, 16)}
    </TitleBar>
  );
}

const TABS = [["文件", 46], ["三维模型", 74], ["草图", 44], ["标注"], ["检验"], ["工具"], ["管理"], ["视图"], ["环境"], ["快速入门", 68], ["协作"]];
const TAB_BG = { 文件: "#ee8126", 草图: "#8bf77f" };
const TAB_FG = { 文件: "#fff", 草图: "#333" };

const tool = (n, label, dd) => (
  <ToolButton key={n}><Icon n={n} w={18} />{label}{dd && <Icon n="down" w={8} h={6} />}</ToolButton>
);

function RibbonBar() {
  return (
    <Ribbon>
      <Group $w={77}>
        <GroupBody>
          <BigButton $w={68}>
            <Icon n="startSketch" w={34} h={34} />
            <span>开始创建<br />二维草图</span>
          </BigButton>
          <Dd w={6} />
        </GroupBody>
        <GroupLabel $mr={18}>草图</GroupLabel>
      </Group>
      <Group $w={359}>
        <GroupBody $pl={4}>
          {[["line", "线", 38], ["circle", "圆", 42], ["arc", "圆弧", 46], ["rect", "矩形", 54]].map(([n, l, w]) => (
            <BigButton key={n} $w={w}><Icon n={n} w={34} h={34} />{l}<Icon n="down" w={7} h={6} /></BigButton>
          ))}
          <Stack $w={69}>
            {tool("fillet", "圆角", true)}{tool("text", "文本", true)}{tool("point", "点")}
          </Stack>
          <Rule $c="#ccc" />
          <BigButton $w={105}><Icon n="project" w={34} h={34} />投影几何图元<Icon n="down" w={7} h={6} /></BigButton>
        </GroupBody>
        <GroupLabel $mr={18}>创建 <Icon n="down" w={9} h={7} /></GroupLabel>
      </Group>
      <Group $w={175}>
        <GroupBody $pl={6}>
          <Stack $w={57}>{tool("move", "移动")}{tool("copy", "复制")}{tool("rotate", "旋转")}</Stack>
          <Stack $w={57}>{tool("trim", "修剪")}{tool("extend", "延伸")}{tool("split", "分割")}</Stack>
          <Stack $w={54}>{tool("scale", "缩放")}{tool("stretch", "拉伸")}{tool("offset", "偏移")}</Stack>
        </GroupBody>
        <GroupLabel $mr={6}>修改</GroupLabel>
      </Group>
      <Group $w={62}>
        <GroupBody $pl={6}>
          <Stack>{tool("patRect", "矩形")}{tool("patCirc", "环形")}{tool("mirror", "镜像")}</Stack>
        </GroupBody>
        <GroupLabel>阵列</GroupLabel>
      </Group>
      <Group $w={182}>
        <GroupBody $pl={3}>
          <DimensionButton $w={39}><Icon n="dimBig" w={32} h={36} /><span>尺寸</span></DimensionButton>
          <Cells $cols={1} $ml={2}>
            {["dimAuto", "showCons", "consSet"].map((n) => <CellButton key={n} aria-label={n}><Icon n={n} w={18} /></CellButton>)}
          </Cells>
          <Cells $cols={4} $ml={11}>
            {["coincident", "collinear", "concentric", "lock", "parallel", "perp", "horiz", "vert", "tangent", "smooth", "symm", "equal"].map((n) => (
              <CellButton key={n} aria-label={n}><Icon n={n} w={17} /></CellButton>
            ))}
          </Cells>
        </GroupBody>
        <GroupLabel>约束 <Icon n="down" w={9} h={7} /></GroupLabel>
      </Group>
      <Group $w={71}>
        <GroupBody $pl={7}>
          <Stack>{tool("image", "图像")}{tool("excel", "点")}{tool("acad", "ACAD")}</Stack>
        </GroupBody>
        <GroupLabel>插入</GroupLabel>
      </Group>
      <Group $w={88}>
        <GroupBody $pl={4}>
          <Stack>
            <Cells $cols={2}>
              {["angle", "param", "ctr", "point"].map((n) => (
                <CellButton key={n} aria-label={n} $on={n === "point"}><Icon n={n} w={17} /></CellButton>
              ))}
            </Cells>
            {tool("format", "显示格式")}
          </Stack>
        </GroupBody>
        <GroupLabel>格式 <Icon n="down" w={9} h={7} /></GroupLabel>
      </Group>
      <Group $w={60}>
        <GroupBody>
          <BigButton $w={60}><Icon n="check" w={34} h={34} />完成草图</BigButton>
        </GroupBody>
        <GroupLabel $bg="#93ff85">退出</GroupLabel>
      </Group>
    </Ribbon>
  );
}

function Drawing() {
  const cross = (x, y) => <path key={x + "," + y} d={`M${x - 11} ${y}h22M${x} ${y - 11}v22`} stroke="#6de028" strokeDasharray="9 3" />;
  return (
    <Sketch width="100%" height="100%">
      <g transform="translate(-597 -196)" fill="none">
        <path d="M1159.5 196v887M597 751h1460" stroke="#4c4c50" strokeWidth="2" />
        <rect x="1062" y="522" width="248" height="372" stroke="#66ff00" strokeWidth="2.5" />
        <path d="M1113 400v118M1255.5 400v118M1113 407.5h107M900 518.5h214M900 830.5h214M911 518v132M911 666v164" stroke="#111" strokeWidth="1.3" />
        <path d="M1113 407.5l12-3v6zM1255 407.5l-8-3v6zM911 519l-3 12h6zM911 830l-3-12h6z" stroke="#111" />
        <path d="M1027 708h316M1184.5 607v222" stroke="#e6f02a" strokeWidth="1.5" strokeDasharray="4 3" />
        <circle cx="1184.5" cy="708" r="2" fill="#66ff00" />
        {cross(1113, 830)}{cross(1262, 830)}{cross(1113, 518)}{cross(1255, 518)}
        <text x="1219" y="412" fontSize="12" fill="#333" fontFamily="Liberation Mono">44.5</text>
        <text x="897" y="664" fontSize="12" fill="#333" fontFamily="Liberation Mono">96.8</text>
        <path d="M652 1028v-28" stroke="#1eb41e" strokeWidth="1.5" />
        <path d="M652 1028h24" stroke="#b41e1e" strokeWidth="1.5" />
        <path d="M646 1007l6-11 6 11z" fill="#0a9a0a" />
        <path d="M673 1022l11 6-11 6z" fill="#a80a0a" />
        <circle cx="652" cy="1028" r="6" fill="#0000b4" />
        <text x="648" y="995" fontSize="13" fill="#3cdc3c" fontFamily="Liberation Serif">Y</text>
        <text x="685" y="1033" fontSize="13" fill="#f05050" fontFamily="Liberation Serif">X</text>
      </g>
    </Sketch>
  );
}

function Inventor() {
  return (
    <Monitor as="div">
      <InventorTitle />
      <DarkBar as="nav" $h={20}>
        {TABS.map(([t, w]) => <RibbonTab key={t} $w={w} $bg={TAB_BG[t]} $fg={TAB_FG[t]}>{t}</RibbonTab>)}
        <Btn $ml={23} aria-label="ribbon state"><Icon n="panelToggle" w={16} h={12} /></Btn>
        <Dd ml={4} w={7} />
      </DarkBar>
      <RibbonBar />
      <Work>
        <Panel $w={243} $bg="#f4f4f4">
          <PanelHead>
            <PanelTab $w={79} $gap={8} $mono>iLogic <Icon n="close" w={12} /></PanelTab>
            <Btn $w={24} aria-label="add"><Icon n="plus" w={10} /></Btn>
            <Spacer />
            <Btn aria-label="menu"><Icon n="burger" w={14} h={12} /></Btn>
          </PanelHead>
          <RuleTabs>
            <RuleTab $w={53} $on>规则</RuleTab><RuleTab $w={48}>表单</RuleTab><RuleTab $w={59}>全局表单</RuleTab><RuleTab $w={56}>外部规则</RuleTab>
          </RuleTabs>
          <RuleBox><TreeRow $plain><Icon n="cube" w={16} />零件1</TreeRow></RuleBox>
        </Panel>
        <Panel $w={302}>
          <PanelHead>
            <PanelTab $w={54} $gap={10}>模型 <Icon n="close" w={10} /></PanelTab>
            <Btn $w={21} aria-label="add"><Icon n="plus" w={10} /></Btn>
            <Spacer />
            <Btn aria-label="search"><Icon n="search" w={14} /></Btn>
            <Btn $ml={10} aria-label="menu"><Icon n="burger" w={14} h={12} /></Btn>
          </PanelHead>
          <TreeRow><Icon n="cube" w={16} />零件1</TreeRow>
          <TreeRow $pl={4}><Icon n="chevron" w={9} /><Icon n="views" w={18} />视图: 主要</TreeRow>
          <TreeRow $pl={4}><Icon n="chevron" w={9} /><Icon n="folder" w={18} />原始坐标系</TreeRow>
          <TreeRow $pl={17} $plain><Icon n="sketch" w={18} />草图1</TreeRow>
          <TreeRow $pl={17}><Icon n="endMark" w={18} />造型终止</TreeRow>
        </Panel>
        <Monitor as="div">
          <View>
            <Drawing />
            <DocButtons $gap={6}>
              <Btn aria-label="minimize"><Icon n="min" w={14} /></Btn><Btn aria-label="restore"><Icon n="restore" w={14} h={13} /></Btn><Btn aria-label="close"><Icon n="boldClose" w={13} /></Btn>
            </DocButtons>
            <CubeFace />
            <AiTag>AI</AiTag>
            <Speed>
              <SpeedRow><Arrow $c="#1ea8f0">↑</Arrow>0.4K/s</SpeedRow>
              <SpeedRow><Arrow $c="#ff9a1a">↓</Arrow>0K/s</SpeedRow>
            </Speed>
            <Gauge>47<small>%</small></Gauge>
            <NavBar>
              <Icon n="close" w={7} /><Icon n="navWheel" w={22} h={24} /><Icon n="down" w={7} h={5} /><NavRule />
              <Icon n="hand" w={24} h={26} /><Icon n="pageZoom" w={22} h={24} /><Icon n="down" w={7} h={5} />
              <Icon n="orbit" w={22} h={24} /><Icon n="down" w={7} h={5} /><Icon n="camera" w={22} h={24} /><Icon n="down" w={7} h={5} />
            </NavBar>
          </View>
          <DocTabs>
            {["cascade", "grid4", "rows2", "cols2"].map((n) => <Btn key={n} $w={25} aria-label={n}><Icon n={n} w={16} /></Btn>)}
            <Btn $w={25} aria-label="expand"><Icon n="up" w={11} /></Btn>
            <Rule $c="#999" />
            {["我的主页", "缸体.ipt", "HGC液压缸.iam", "SAE6000-DN50.ipt", "SAE6000-50.ipt"].map((t) => <DocTab key={t}>{t}</DocTab>)}
            <DocTab $on $pad={8} $gap={12}>零件1 <Icon n="boldClose" w={9} /></DocTab>
          </DocTabs>
        </Monitor>
      </Work>
      <StatusBar>
        <Prompt>选择要标注尺寸的几何图元</Prompt>
        <Rule $c="#ccc" $m={2} />
        {["gridSnap", "shield", "tolerance"].map((n) => <Btn key={n} $w={25} aria-label={n}><Icon n={n} w={18} /></Btn>)}
        <Btn $ml={10} $w={25} aria-label="slice"><Icon n="slab" w={18} /></Btn>
        {["moveBulb", "moveLine"].map((n) => <Btn key={n} $w={25} aria-label={n}><Icon n={n} w={18} /></Btn>)}
        <Spacer />
        <StatusCell $w={168} $size={13}>-123.823 mm, 121.137 mm</StatusCell>
        <StatusCell $w={94}>需要 17 个尺寸</StatusCell>
        <StatusCell $w={40} $pl={9}>1</StatusCell>
        <StatusCell $w={40} $pl={9}>8</StatusCell>
      </StatusBar>
    </Monitor>
  );
}

/* ---------- spreadsheet ---------- */

const WpsTop = styled(Row)`
  height: 28px;
  flex: none;
  background: #e2e2e4;
  color: #444;
  font-size: 13px;
`;
const WpsLogo = styled(Btn)`
  width: 106px;
  height: 28px;
  background: linear-gradient(90deg, #64ab3f 90px, #579a35 90px);
  color: #fff;
  font-size: 14px;
  font-weight: 600;
`;
const Menu = styled.button`
  width: ${(p) => p.$w}px;
  padding: 0;
  border: 0;
  background: none;
  white-space: nowrap;
  font-weight: ${(p) => (p.$on ? 700 : 400)};
  color: ${(p) => (p.$on ? "#3f9a26" : "#444")};
`;
const Account = styled(Row)`
  height: 28px;
  padding-right: 4px;
  background: #cfcfd1;
`;
const Files = styled(Row)`
  height: 26px;
  flex: none;
  background: #fafafb;
  color: #888;
`;
const Quick = styled(Row)`
  width: 186px;
  height: 26px;
  flex: none;
`;
const FileTab = styled(Btn)`
  height: 26px;
  width: ${(p) => p.$w || 208}px;
  padding: 0 5px;
  gap: 3px;
  justify-content: flex-start;
  border-bottom: ${(p) => (p.$on ? 2 : 0)}px solid #78b060;
  background: ${(p) => (p.$on ? "#e0edd9" : "#efeff0")};
  color: #444;
  font-size: 13px;
  & > svg:last-child { margin-left: auto; color: #333; }
`;
const Body = styled.div`
  display: flex;
  flex: 1 1 0;
  min-height: 0;
`;
const Book = styled.div`
  flex: 1;
  min-width: 0;
  display: flex;
  flex-direction: column;
`;
const Formula = styled(Row)`
  height: 27px;
  flex: none;
  padding-bottom: 1px;
  background: #e2e3e6;
`;
const NameBox = styled.input`
  width: 121px;
  height: 22px;
  flex: none;
  padding: 0 20px 0 0;
  border: 0;
  background: #fff;
  color: #444;
  font: 16px/20px ${SERIF};
  text-align: center;
`;
const FormulaInput = styled.input`
  flex: 1;
  min-width: 0;
  height: 22px;
  margin-left: 18px;
  border: 0;
  background: #fff;
`;
const Scroller = styled.div`
  display: flex;
  flex: 1 1 0;
  min-height: 0;
`;
const Clip = styled.div`
  flex: 1;
  min-width: 0;
  overflow: hidden;
`;
const Table = styled.table`
  width: 100%;
  table-layout: fixed;
  border-collapse: separate;
  border-spacing: 0;
  background: #fff;
  color: #111;
  font: 24px/23px ${SERIF};
  tbody tr { height: 29px; }
  tbody tr:nth-child(7n) { height: 30px; }
`;
const Col = styled.col`width: ${(p) => (p.$w ? p.$w + "px" : "auto")};`;
const ColHead = styled.th`
  height: 30px;
  padding: 4px 0 0;
  border-right: 1px solid #d0d0d0;
  border-bottom: ${(p) => (p.$on ? "3px solid #5ba53a" : "1px solid #bcbcbc")};
  background: ${(p) => (p.$on ? "#d6e6d0" : "#efefef")};
  color: ${(p) => (p.$on ? "#2f8f1e" : "#555")};
  font-weight: 400;
  & > svg { margin: 0 5px 4px auto; }
`;
const RowHead = styled.th`
  padding: 4px 10px 0 0;
  border-right: ${(p) => (p.$on ? "2px solid #5ba53a" : "1px solid #c6c6c6")};
  border-bottom: 1px solid #dcdcdc;
  background: ${(p) => (p.$on ? "#d6e6d0" : "#efefef")};
  color: ${(p) => (p.$on ? "#2f8f1e" : "#666")};
  font-weight: 400;
  text-align: right;
`;
const Cell = styled.td`
  padding: 4px 4px 0;
  border-right: 1px solid #c6c6c6;
  border-bottom: 1px solid #c6c6c6;
  white-space: nowrap;
  text-align: ${(p) => p.$align || "left"};
  color: ${(p) => (p.$red ? "#ff1a00" : "#111")};
  font-size: ${(p) => (p.$small ? 22 : 24)}px;
  ${(p) => p.$yellow && css`background: #ff0; border-color: #ff0;`}
  ${(p) => p.$sel && css`border-left: 2px solid #5ba53a; border-right: 2px solid #5ba53a;`}
  ${(p) => p.$sel === "first" && css`border-top: 2px solid #5ba53a;`}
  ${(p) => p.$sel === "rest" && css`background: #e2f5d8;`}
`;
const VScroll = styled.div`
  display: flex;
  flex-direction: column;
  align-items: center;
  width: 20px;
  flex: none;
  padding: 6px 0;
  background: #c6c6c9;
  color: #666;
`;
const VThumb = styled.div`
  display: flex;
  align-items: center;
  justify-content: center;
  width: 16px;
  height: 388px;
  margin-top: 32px;
  background: #f3f3f3;
  color: #888;
`;
const Side = styled.aside`
  display: flex;
  flex-direction: column;
  align-items: center;
  gap: 16px;
  width: 42px;
  flex: none;
  padding-top: 41px;
  background: #ecedf0;
`;
const SideButton = styled(Btn)`
  flex-direction: column;
  height: 36px;
  gap: 2px;
  color: #8c8c8c;
`;
const Edge = styled.div`
  width: 8px;
  flex: none;
  padding-top: 471px;
  background: #dcdde0;
`;
const EdgeGrip = styled.div`
  display: flex;
  align-items: center;
  justify-content: center;
  height: 106px;
  background: #5aa632;
  color: #fff;
`;
const SheetBar = styled(Row)`
  height: 26px;
  flex: none;
  background: #c5c5c7;
  color: #999;
`;
const SheetTab = styled(Btn)`
  width: 71px;
  height: 26px;
  background: #fff;
  color: #3f9a26;
  font-size: 13px;
`;
const HScroll = styled.div`
  display: flex;
  align-items: center;
  flex: 0 1 774px;
  height: 14px;
  gap: 8px;
  padding-right: 8px;
  border-left: 2px solid #999;
  border-right: 2px solid #999;
  color: #555;
`;
const HThumb = styled.div`
  display: flex;
  align-items: center;
  justify-content: center;
  width: 637px;
  height: 14px;
  background: #f4f4f4;
  color: #888;
`;
const WpsStatus = styled(Row)`
  height: 24px;
  flex: none;
  padding-right: 6px;
  border-top: 1px solid #ccc;
  background: #dedee0;
  color: #444;
`;
const Zoom = styled.input`
  appearance: none;
  width: 140px;
  height: 16px;
  margin: 0 4px 0 5px;
  background: linear-gradient(90deg, #5ba53a 60%, #8a8a94 60%) center / 100% 3px no-repeat;
  &::-webkit-slider-thumb {
    appearance: none;
    width: 14px;
    height: 14px;
    border: 2px solid #999;
    border-radius: 50%;
    background: #fff;
  }
`;

const COLS = [["A", 130], ["B", 120], ["C", 120], ["D", 119], ["E", 120], ["F", 119], ["G", 120], ["H", 120], ["I", 119], ["J", 166], ["K", 120], ["L", 119], ["M", 120], ["N", 119], ["O", 120], ["", 0]];

/* "!" marks a value shown in red */
const DATA = {
  33: { A: "51-3 ‘", B: "210", C: "!42.9", D: "!77.8", E: "97", F: "102", J: "M12*35", K: "M12*50" },
  34: { A: "64-3 ‘", B: "210", C: "!50.8", D: "!88.9", E: "!101", F: "!115", J: "M12*40", K: "M12*55" },
  35: { A: "76-3 ‘", B: "210", C: "!61.9", D: "!106.4", E: "131", F: "135", J: "M16*45", K: "M16*65" },
  36: { A: "89-3 ‘", B: "210", C: "69.9", D: "120.6", E: "137", F: "153", J: "M16*45", K: "M16*70" },
  37: { A: "102-3 ‘", B: "210", C: "77.8", D: "130.2", E: "147", F: "163", J: "M16*50", K: "M16*70" },
  38: { A: "127-3 ‘", B: "210", C: "92.1", D: "152.4", E: "165", F: "184", J: "M16*50", K: "M16*80" },
  41: { A: "欧际", B: "AF**-6", D: "410bar" },
  42: { B: "压力", C: "A", D: "B", E: "G", F: "H" },
  43: { A: "13-6 ‘", B: "410", C: "!18.2", D: "!40.5", E: "48", F: "!57", J: "M8*30" },
  44: { A: "19-6 ‘", B: "410", C: "!23.8", D: "!50.8", E: "60", F: "!72", J: "M10*35" },
  45: { A: "25-6 ‘", B: "410", C: "!27.8", D: "!57.2", E: "70", F: "81", J: "M12*40" },
  46: { A: "32-6 ‘", B: "410", C: "!31.7", D: "!66.7", E: "78", F: "!96", J: "M14*45" },
  47: { A: "38-6 ‘", B: "410", C: "!36.5", D: "!79.4", E: "95", F: "113", J: "M16*50" },
  48: { A: "51-6 ‘", B: "410", C: "!44.5", D: "!96.8", E: "114", F: "!134", J: "M20*60" },
  49: { A: "65-6 ‘", B: "320", C: "58.7", D: "123.8", E: "!150", F: "!174", J: "M24*80" },
  50: { A: "80-6 ‘", B: "320", C: "71.4", D: "152.4", E: "!178", F: "!215", J: "M30*100" },
  53: { A: "欧际", B: "F**-0", D: "PN10-64" },
  54: { B: "压力", C: "B", D: "D", E: "T" },
  55: { A: "32-0 ‘", C: "!80", E: "72", J: "M12*40" },
  56: { A: "40-0 ‘", C: "!90", E: "80" },
  57: { A: "50-0 ‘", C: "!100", E: "98" },
  58: { A: "65-0 ‘", C: "!120", E: "118" },
  59: { A: "80-0 ‘", C: "!150", E: "145" },
  60: { A: "90-0 ‘", C: "!180", E: "175" },
  61: { A: "100-0 ‘", C: "!180", E: "175" },
  62: { A: "125-0 ‘", D: "!245", E: "200" },
  63: { A: "150-0 ‘", D: "!300", E: "245" },
};
const ROWS = Array.from({ length: 32 }, (_, i) => 33 + i);

function isYellow(c, r) {
  const block = (r >= 33 && r <= 38) || (r >= 43 && r <= 50);
  if (c === "C" || c === "D") return block || r >= 55;
  if (c === "J") return block || r === 55;
  return c === "K" && r <= 38;
}
function alignOf(c, v, r) {
  if (c === "E" || c === "F") return "right";
  if (c === "B" && /^\d+$/.test(v)) return "right";
  if (c === "C" || (c === "D" && r !== 41 && r !== 53)) return "center";
  return "left";
}

function Grid() {
  return (
    <Table>
      <colgroup><Col $w={47} />{COLS.map(([c, w]) => <Col key={c} $w={w} />)}</colgroup>
      <thead>
        <tr>
          <ColHead><Icon n="corner" w={17} /></ColHead>
          {COLS.map(([c]) => <ColHead key={c} scope="col" $on={c === "I"}>{c}</ColHead>)}
        </tr>
      </thead>
      <tbody>
        {ROWS.map((r) => (
          <tr key={r}>
            <RowHead scope="row" $on={r >= 54}>{r}</RowHead>
            {COLS.map(([c]) => {
              const raw = (DATA[r] && DATA[r][c]) || "";
              const v = raw.replace("!", "");
              return (
                <Cell
                  key={c}
                  $red={raw[0] === "!"}
                  $small={c === "J" || c === "K" || (r === 53 && c === "D")}
                  $align={alignOf(c, v, r)}
                  $yellow={isYellow(c, r)}
                  $sel={c === "I" && r >= 54 ? (r === 54 ? "first" : "rest") : undefined}
                >
                  {v}
                </Cell>
              );
            })}
          </tr>
        ))}
      </tbody>
    </Table>
  );
}

const Handle = ({ vertical }) => (
  <svg width="12" height="12" viewBox="0 0 12 12" aria-hidden="true">
    <path d={vertical ? "M2 2h8M2 6h8M2 10h8" : "M2 1v10M6 1v10M10 1v10"} stroke="#888" />
  </svg>
);

const FILES = [["流-宏达.xlsx *"], ["流.xlsx *"], ["SAE1.xlsx"], ["无缝钢管20240906.xls *"], ["中钢元件清单1.xlsx (只读) *", 213]];
const MENUS = [["开始", 68], ["可牛模板", 68], ["插入", 68], ["页面布局", 69], ["公式", 69], ["数据", 64], ["审阅", 64], ["视图", 66], ["开发工具", 72], ["特色功能", 74]];
const SIDE = [["page", "新建"], ["blocks", "分析"], ["pick", "选择"], ["people", "分享"], ["bubble", "反馈"], ["wrench", "属性"], ["backup", "备份"]];

function Wps() {
  return (
    <Monitor as="div">
      <WpsTop as="header">
        <WpsLogo $gap={5}><Icon n="wps" w={15} h={14} />WPS 表格<Gap $w={2} /><Icon n="down" w={7} h={5} /></WpsLogo>
        <Gap $w={6} />
        {MENUS.map(([t, w]) => <Menu key={t} $w={w} $on={t === "开始"}>{t}</Menu>)}
        <Spacer />
        <Account $gap={3}><Icon n="face" w={29} h={28} />LXG<Icon n="crown" w={15} /><Icon n="down" w={7} h={5} /></Account>
        <Gap $w={5} />
        <Btn aria-label="skin"><Icon n="shirt" w={14} h={13} /></Btn>
        <Btn $ml={11} aria-label="feedback"><Icon n="chat" w={14} h={13} /></Btn>
        <Btn $ml={11} $gap={3} aria-label="help"><b>?</b><Icon n="down" w={6} h={5} /></Btn>
        <Rule $ml={11} $m={7} $c="#999" />
        <Btn $ml={8} aria-label="collapse"><Icon n="inbox" w={16} /></Btn>
        <Rule $ml={11} $m={7} $c="#999" />
        <Btn $ml={10} aria-label="minimize"><Icon n="min" w={14} /></Btn>
        <Btn $ml={14} aria-label="restore"><Icon n="restore" w={15} /></Btn>
        <Btn $ml={18} aria-label="close"><Icon n="close" w={15} /></Btn>
        <Gap $w={12} />
      </WpsTop>
      <Files as="nav">
        <Quick>
          {["folderG", "saveB", "pdf", "print", "preview", "undoC", "redoC"].map((n, i) => (
            <Btn key={n} $w={i ? 23 : 16} aria-label={n}><Icon n={n} w={16} /></Btn>
          ))}
          <Rule $c="#ccc" $m={3} $ml={4} />
          <Btn $w={25} aria-label="customize"><Icon n="down" w={9} h={7} /></Btn>
        </Quick>
        {FILES.map(([t, w]) => (
          <FileTab key={t} $w={w} $on={t === "SAE1.xlsx"}><Icon n="xls" w={16} />{t}<Icon n="close" w={9} /></FileTab>
        ))}
        <Btn $w={28} aria-label="new file"><Icon n="thinPlus" w={14} /></Btn>
        <Spacer />
        <Icon n="page" w={11} /><Gap $w={18} /><Icon n="drop" w={12} /><Gap $w={22} /><Icon n="down" w={10} h={8} /><Gap $w={12} />
      </Files>
      <Body>
        <Book>
          <Formula>
            <NameBox aria-label="name box" defaultValue="I54" />
            <Btn $w={48} $c="#d8453f" aria-label="cancel"><Icon n="close" w={11} /></Btn>
            <Btn aria-label="accept"><Icon n="tick" w={12} /></Btn>
            <Btn $ml={11} aria-label="function"><Icon n="fx" w={20} /></Btn>
            <FormulaInput aria-label="formula" />
          </Formula>
          <Scroller>
            <Clip><Grid /></Clip>
            <VScroll>
              <Icon n="up" w={9} />
              <VThumb><Handle vertical /></VThumb>
              <Spacer />
              <Icon n="down" w={10} h={8} />
            </VScroll>
          </Scroller>
          <SheetBar>
            <Gap $w={2} />
            {["left", "left", "right", "right"].map((n, i) => <Btn key={i} $w={i === 3 ? 20 : 16} aria-label={n}><Icon n={n} w={6} h={11} /></Btn>)}
            <SheetTab>Sheet1</SheetTab>
            <Btn $w={32} $c="#555" aria-label="add sheet"><Icon n="thinPlus" w={14} /></Btn>
            <Spacer />
            <HScroll>
              <Gap $w={2} /><Icon n="left" w={6} h={10} />
              <HThumb><Handle /></HThumb>
              <Spacer />
              <Icon n="right" w={6} h={10} />
            </HScroll>
            <Gap $w={27} />
          </SheetBar>
        </Book>
        <Side>
          {SIDE.map(([n, t]) => <SideButton key={t}><Icon n={n} w={18} />{t}</SideButton>)}
        </Side>
        <Edge><EdgeGrip><Icon n="right" w={6} h={8} /></EdgeGrip></Edge>
      </Body>
      <WpsStatus>
        <Gap $w={31} />输入状态<Gap $w={48} /><Icon n="stat" w={17} /><Gap $w={16} />求和=0&nbsp; 平均值=0&nbsp; 计数=0
        <Spacer />
        <Btn aria-label="normal"><Icon n="vNormal" w={17} /></Btn>
        <Btn $ml={22} aria-label="page break"><Icon n="vBreak" w={17} /></Btn>
        <Btn $ml={22} aria-label="reading"><Icon n="vCross" w={17} /></Btn><Dd ml={5} w={6} />
        <Btn $ml={15} aria-label="eye care"><Icon n="bulb" w={16} /></Btn><Dd ml={5} w={6} />
        <Gap $w={12} />160 %<Gap $w={6} /><Icon n="min" w={12} />
        <Zoom type="range" aria-label="zoom" min="0" max="100" defaultValue="60" />
        <Icon n="thinPlus" w={12} />
      </WpsStatus>
    </Monitor>
  );
}

/* ---------- annotations ---------- */

const Mark = styled.div`
  position: absolute;
  left: ${(p) => p.$x}px;
  top: ${(p) => p.$y}px;
  width: ${(p) => p.$w}px;
  height: ${(p) => p.$h}px;
  border: ${(p) => p.$b || 4}px solid ${(p) => p.$c};
  pointer-events: none;
`;
const Dot = styled.div`
  position: absolute;
  left: ${(p) => p.$x - 6}px;
  top: ${(p) => p.$y - 6}px;
  width: 12px;
  height: 12px;
  border-radius: 50%;
  background: ${(p) => p.$c};
`;
const DotName = styled.div`
  position: absolute;
  left: ${(p) => p.$x}px;
  top: ${(p) => p.$y}px;
  color: ${(p) => p.$c};
  font: 700 7px/8px "DejaVu Sans", sans-serif;
`;
const Legend = styled.aside`
  position: absolute;
  top: 70px;
  right: 70px;
  display: flex;
  flex-direction: column;
  width: 314px;
  height: 335px;
  padding: 2px 12px 0 13px;
  border: 6px solid rgba(204,204,204,.8);
  border-radius: 9px;
  background: rgba(255,255,255,.8);
  background-clip: padding-box;
  color: #000;
  font: 42px/63px "DejaVu Sans", sans-serif;
`;
const LegendRow = styled.div`
  display: flex;
  align-items: center;
  gap: 31px;
  height: 63px;
  white-space: nowrap;
`;
const Key = styled.div`
  width: 89px;
  height: 33px;
  flex: none;
  border: ${(p) => p.$b}px solid ${(p) => p.$c};
`;
const DotKey = styled.div`
  width: 13px;
  height: 13px;
  flex: none;
  margin: 0 38px;
  border-radius: 50%;
  background: #e74c3c;
`;

const ORANGE = "rgba(243,156,18,.4)";
const BLUE = "rgba(41,128,185,.4)";
const PURPLE = "rgba(142,68,173,.4)";

function Annotations() {
  return (
    <>
      <Mark $x={50} $y={50} $w={2001} $h={566} $c={ORANGE} />
      <Mark $x={337} $y={50} $w={1002} $h={285} $c={BLUE} />
      <Mark $x={583} $y={91} $w={503} $h={144} $c={PURPLE} />
      <Mark $x={803} $y={102} $w={29} $h={22} $b={2} $c="#1eff1e" />
      <Dot $x={828} $y={140} $c="#8e44ad" /><DotName $x={832} $y={129} $c="#8e44ad">S4</DotName>
      <Dot $x={804} $y={160} $c="#e74c3c" /><DotName $x={808} $y={149} $c="#e74c3c">S1</DotName>
      <Dot $x={838} $y={161} $c="#f39c12" /><DotName $x={842} $y={149} $c="#f39c12">S2</DotName>
      <Dot $x={834} $y={164} $c="#2980b9" /><DotName $x={839} $y={153} $c="#2980b9">S3</DotName>
      <Legend>
        <LegendRow><Key $b={2} $c="#1eff1e" />GT Box</LegendRow>
        <LegendRow><DotKey />Step 1</LegendRow>
        <LegendRow><Key $b={4} $c={ORANGE} />Step 2</LegendRow>
        <LegendRow><Key $b={4} $c={BLUE} />Step 3</LegendRow>
        <LegendRow><Key $b={4} $c={PURPLE} />Step 4</LegendRow>
      </Legend>
    </>
  );
}

export default function App() {
  return (
    <Page>
      <Global />
      <Desktop>
        <Monitor>
          <Screen><Inventor /></Screen>
          <MainTaskbar />
        </Monitor>
        <Monitor>
          <Screen><Black /><Wps /></Screen>
          <SecondTaskbar />
        </Monitor>
      </Desktop>
      <Annotations />
    </Page>
  );
}
